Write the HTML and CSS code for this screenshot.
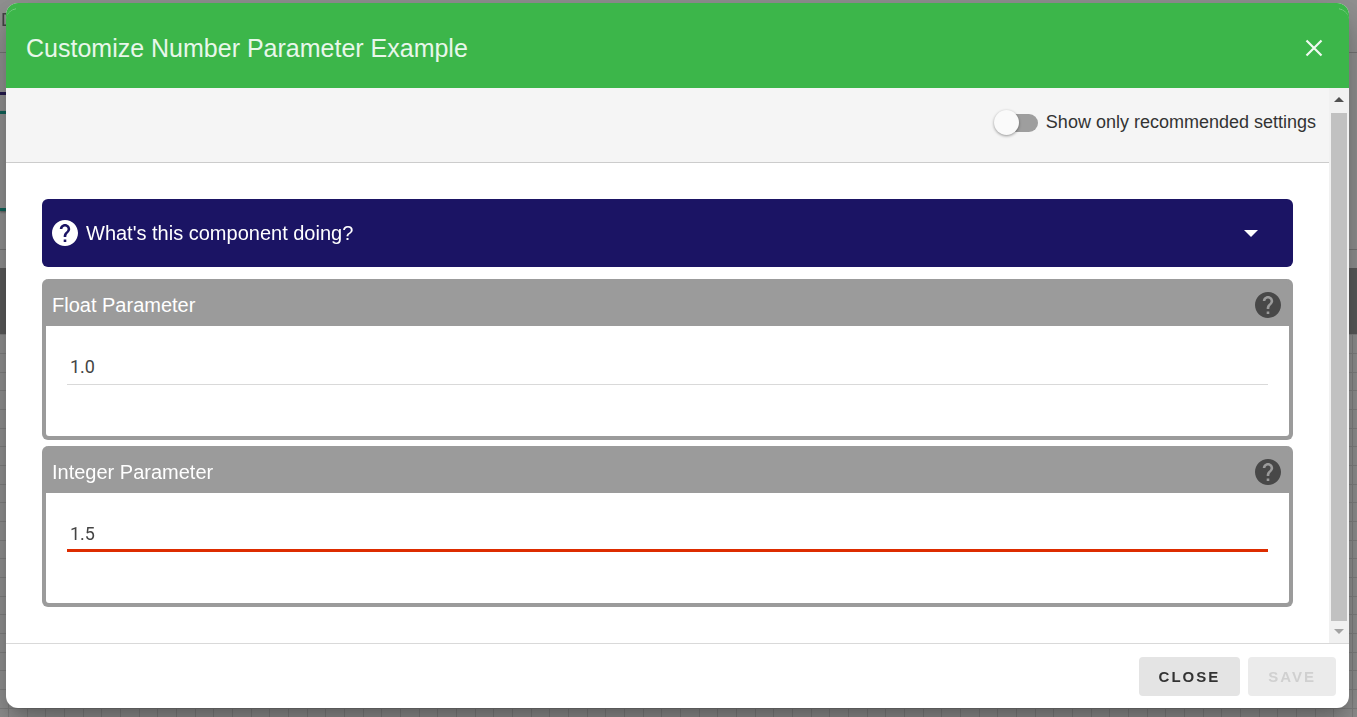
FILE: index.html
```
<!DOCTYPE html>
<html lang="en">
<head>
<meta charset="utf-8">
<title>Customize Number Parameter Example</title>
<link rel="stylesheet" href="styles.css">
</head>
<body>
<div class="workspace" aria-hidden="true">
  <div class="workspace-bar">D</div>
  <div class="workspace-tabs">
    <div class="tab-rule tab-rule-navy"></div>
    <div class="tab-panel"></div>
  </div>
  <div class="workspace-strip"></div>
  <div class="workspace-band"></div>
  <div class="workspace-grid"></div>
</div>
<div class="overlay">
  <section class="dialog" role="dialog" aria-modal="true" aria-labelledby="dialog-title">
    <header class="dialog-header">
      <h1 class="dialog-title" id="dialog-title">Customize Number Parameter Example</h1>
      <button class="icon-button" type="button" aria-label="Close dialog">
        <svg width="18" height="18" viewBox="0 0 18 18"><path d="M1.5 1.5 16.5 16.5M16.5 1.5 1.5 16.5" fill="none" stroke="currentColor" stroke-width="2.2"/></svg>
      </button>
    </header>
    <div class="dialog-main">
      <div class="dialog-content">
        <div class="toolbar">
          <label class="switch"><input class="switch-input" type="checkbox"><span>Show only recommended settings</span></label>
        </div>
        <div class="panels">
          <button class="help-panel" type="button" aria-expanded="false">
            <svg class="help-icon" viewBox="2 2 20 20"><path fill="currentColor" d="M12 2C6.48 2 2 6.48 2 12s4.48 10 10 10 10-4.48 10-10S17.52 2 12 2zm1 17h-2v-2h2v2zm2.07-7.75-.9.92C13.45 12.9 13 13.5 13 15h-2v-.5c0-1.1.45-2.1 1.17-2.83l1.24-1.26c.37-.36.59-.86.59-1.41 0-1.1-.9-2-2-2s-2 .9-2 2H8c0-2.21 1.79-4 4-4s4 1.79 4 4c0 .88-.36 1.68-.93 2.25z"/></svg>
            <span class="help-label">What's this component doing?</span>
            <svg class="caret" width="14" height="7" viewBox="0 0 14 7"><path fill="currentColor" d="M0 0h14L7 7z"/></svg>
          </button>
          <div class="cards">
            <section class="card">
              <div class="card-header">
                <label for="float-value">Float Parameter</label>
                <button class="card-help" type="button" aria-label="Help for Float Parameter"><svg class="help-icon" viewBox="2 2 20 20"><path fill="currentColor" d="M12 2C6.48 2 2 6.48 2 12s4.48 10 10 10 10-4.48 10-10S17.52 2 12 2zm1 17h-2v-2h2v2zm2.07-7.75-.9.92C13.45 12.9 13 13.5 13 15h-2v-.5c0-1.1.45-2.1 1.17-2.83l1.24-1.26c.37-.36.59-.86.59-1.41 0-1.1-.9-2-2-2s-2 .9-2 2H8c0-2.21 1.79-4 4-4s4 1.79 4 4c0 .88-.36 1.68-.93 2.25z"/></svg></button>
              </div>
              <div class="card-body"><input class="field" id="float-value" type="text" value="1.0"></div>
            </section>
            <section class="card">
              <div class="card-header">
                <label for="integer-value">Integer Parameter</label>
                <button class="card-help" type="button" aria-label="Help for Integer Parameter"><svg class="help-icon" viewBox="2 2 20 20"><path fill="currentColor" d="M12 2C6.48 2 2 6.48 2 12s4.48 10 10 10 10-4.48 10-10S17.52 2 12 2zm1 17h-2v-2h2v2zm2.07-7.75-.9.92C13.45 12.9 13 13.5 13 15h-2v-.5c0-1.1.45-2.1 1.17-2.83l1.24-1.26c.37-.36.59-.86.59-1.41 0-1.1-.9-2-2-2s-2 .9-2 2H8c0-2.21 1.79-4 4-4s4 1.79 4 4c0 .88-.36 1.68-.93 2.25z"/></svg></button>
              </div>
              <div class="card-body"><input class="field field-error" id="integer-value" type="text" value="1.5" aria-invalid="true"></div>
            </section>
          </div>
        </div>
      </div>
      <div class="scrollbar" aria-hidden="true">
        <svg class="scroll-arrow" width="10" height="5" viewBox="0 0 10 5"><path fill="#505050" d="M0 5h10L5 0z"/></svg>
        <div class="scroll-thumb"></div>
        <svg class="scroll-arrow" width="10" height="5" viewBox="0 0 10 5"><path fill="#a3a3a3" d="M0 0h10L5 5z"/></svg>
      </div>
    </div>
    <footer class="dialog-footer">
      <button class="action" type="button">CLOSE</button>
      <button class="action" type="button" disabled>SAVE</button>
    </footer>
  </section>
</div>
</body>
</html>
```
FILE: styles.css
```
* { box-sizing: border-box; }

body {
  margin: 0;
  min-height: 100vh;
  overflow: hidden;
  background: #929292;
  font-family: "Liberation Sans", Arial, sans-serif;
}

button { margin: 0; border: 0; font: inherit; cursor: pointer; }
svg { display: block; flex: none; }

/* Dimmed page behind the dialog */
.workspace {
  position: fixed;
  inset: 0;
  display: flex;
  flex-direction: column;
}

.workspace-bar {
  height: 53px;
  padding: 10px 1px;
  border-bottom: 1px solid #777;
  color: #444;
  font-size: 18px;
  line-height: 20px;
}

.workspace-tabs { height: 197px; padding-top: 39px; border-bottom: 1px solid #777; }
.tab-rule { width: 50%; height: 3px; }
.tab-rule-navy { background: #251b4f; margin-bottom: 16px; }
.tab-panel {
  width: 50%;
  height: 100px;
  border: solid #12655b;
  border-width: 3px 0;
  box-shadow: 0 1px 2px #555;
}

.workspace-strip { height: 18px; }
.workspace-band { height: 66px; background: #5c5c5c; }

.workspace-grid {
  flex: 1;
  background-image:
    linear-gradient(#838383 1px, transparent 1px 19px, #838383 19px 20px, transparent 20px 37px, #838383 37px 38px, transparent 38px),
    linear-gradient(90deg, #838383 1px, transparent 1px 19px, #838383 19px 20px, transparent 20px 37px, #838383 37px 38px, transparent 38px);
  background-size: 56px 56px;
  background-position: 8px 19px;
}

/* Dialog */
.overlay {
  position: fixed;
  inset: 0;
  display: flex;
  padding: 3px 8px 9px 6px;
}

.dialog {
  flex: 1;
  display: flex;
  flex-direction: column;
  overflow: hidden;
  border-radius: 12px;
  background: #fff;
  box-shadow: 0 11px 15px -7px rgba(0, 0, 0, .2), 0 24px 38px 3px rgba(0, 0, 0, .14), 0 9px 46px 8px rgba(0, 0, 0, .12);
}

.dialog-header {
  position: relative;
  display: flex;
  align-items: center;
  justify-content: space-between;
  height: 85px;
  padding: 4px 26px 0 20px;
  background: #3cb64a;
  color: #e8f7ea;
}

/* Faint highlight on the two rounded corners */
.dialog-header::after {
  content: "";
  position: absolute;
  inset: 5px 0 0;
  border-top: 1px solid rgba(255, 255, 255, .4);
  border-radius: 12px 12px 0 0;
  pointer-events: none;
  mask-image: linear-gradient(90deg, #000 10px, transparent 10px calc(100% - 10px), #000 calc(100% - 10px));
}

.dialog-title { margin: 0; font-size: 25px; line-height: 32px; font-weight: 400; }
.icon-button { padding: 0; background: none; color: #f0faf1; }

.dialog-main { flex: 1; display: flex; min-height: 0; }
.dialog-content { flex: 1; min-width: 0; overflow: hidden; }

.toolbar {
  display: flex;
  justify-content: flex-end;
  height: 75px;
  padding: 20px 13px 0;
  border-bottom: 1px solid #ccc;
  background: #f5f5f5;
}

.switch {
  display: flex;
  align-items: center;
  gap: 8px;
  height: 29px;
  color: #333;
  font-size: 18px;
  line-height: 28px;
}

.switch span { padding-bottom: 2px; }

.switch-input {
  appearance: none;
  display: flex;
  align-items: center;
  width: 44px;
  height: 18px;
  margin: 0;
  border-radius: 9px;
  background: linear-gradient(90deg, transparent 12px, #9e9e9e 12px);
}

.switch-input::before {
  content: "";
  width: 25px;
  height: 25px;
  border-radius: 50%;
  background: #fafafa;
  box-shadow: 0 1px 3px rgba(0, 0, 0, .4);
}

.switch-input:checked { justify-content: flex-end; }

.panels { display: flex; flex-direction: column; gap: 12px; padding: 36px; }

.help-panel {
  display: flex;
  align-items: center;
  gap: 8px;
  height: 68px;
  padding: 0 35px 0 10px;
  border-radius: 6px;
  background: #1b1464;
  color: #fff;
  font-size: 20px;
  line-height: 24px;
  text-align: left;
}

.help-icon { width: 26px; height: 26px; }
.help-label { flex: 1; }

.cards { display: flex; flex-direction: column; gap: 6px; }

.card { border: solid #9b9b9b; border-width: 0 4px 4px; border-radius: 6px; background: #9b9b9b; }

.card-header {
  display: flex;
  align-items: center;
  justify-content: space-between;
  height: 47px;
  padding: 4px 8px 0 6px;
  color: #fff;
  font-size: 20px;
  line-height: 24px;
}

.card-help { padding: 0; background: none; color: #484848; }

.card-body { padding: 21px 21px 51px; border-radius: 0 0 3px 3px; background: #fff; }

.field {
  display: block;
  width: 100%;
  height: 38px;
  padding: 1px 3px 0;
  border: 0;
  border-radius: 0;
  outline: 0;
  box-shadow: inset 0 -1px #d9d9d9;
  background: none;
  color: #444;
  font-family: Roboto, sans-serif;
  font-size: 18px;
}

.field-error { box-shadow: inset 0 -3px #dd2c00; }

.scrollbar {
  display: flex;
  flex-direction: column;
  align-items: center;
  width: 20px;
  padding: 9px 2px;
  gap: 8px;
  background: #f1f1f1;
}

.scroll-thumb { flex: 1; width: 100%; margin-top: 3px; background: #c1c1c1; }

.dialog-footer {
  display: flex;
  justify-content: flex-end;
  gap: 8px;
  padding: 13px 13px 12px;
  border-top: 1px solid #d9d9d9;
}

.action {
  height: 39px;
  padding: 0 20px;
  border-radius: 4px;
  background: #e4e4e4;
  color: #333;
  font-size: 15px;
  font-weight: 700;
  letter-spacing: 2px;
}

.action:disabled { background: #ebebeb; color: #d0d0d0; cursor: default; }
```
